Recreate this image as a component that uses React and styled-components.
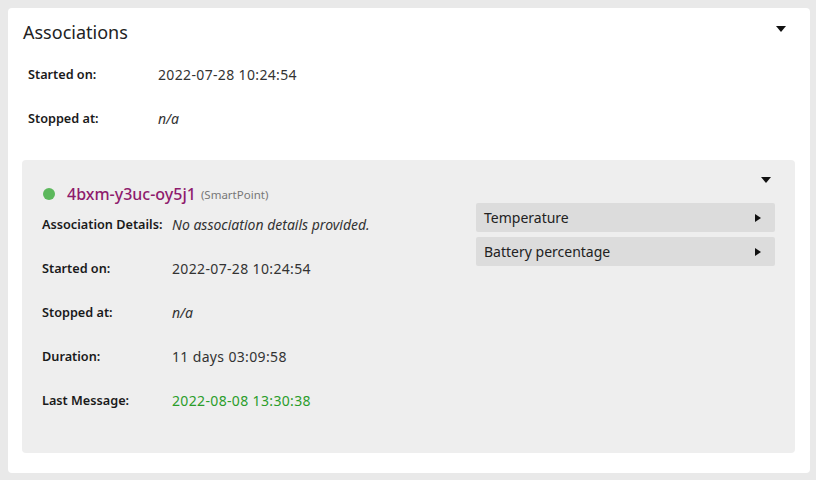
import styled, { createGlobalStyle } from "styled-components";

const GlobalStyle = createGlobalStyle`
  body {
    margin: 0;
    background: #e9e9e9;
    font-family: "Noto Sans", "Open Sans", sans-serif;
    color: #222;
  }
`;

const Page = styled.div`
  padding: 8px 6px 8px 8px;
`;

const Card = styled.section`
  background: #fff;
  border-radius: 4px;
  padding: 13px 15px 20px 14px;
`;

const CardHeader = styled.div`
  display: flex;
  justify-content: space-between;
  align-items: flex-start;
  height: 22px;
  padding-left: 1px;
`;

const Title = styled.h2`
  margin: 0;
  font-size: 18px;
  font-weight: 400;
  line-height: 22px;
  color: #222;
`;

const Caret = styled.span`
  width: 0;
  height: 0;
  border-left: 5px solid transparent;
  border-right: 5px solid transparent;
  border-top: 6px solid #111;
  margin-top: ${(p) => p.top || 0}px;
  margin-right: ${(p) => p.mr || 0}px;
`;

const PlayCaret = styled.span`
  width: 0;
  height: 0;
  border-top: 4.5px solid transparent;
  border-bottom: 4.5px solid transparent;
  border-left: 6px solid #111;
`;

const Rows = styled.div`
  padding: 9px 0 0 ${(p) => p.indent || 0}px;
`;

const Row = styled.div`
  display: grid;
  grid-template-columns: ${(p) => p.labelWidth}px 1fr;
  align-items: center;
  height: 44px;
`;

const Label = styled.span`
  font-size: 12.7px;
  font-weight: 600;
  color: #1a1a1a;
`;

const Value = styled.span`
  font-size: 14px;
  letter-spacing: ${(p) => (p.italic ? "0" : "0.35px")};
  color: ${(p) => p.color || "#333"};
  font-style: ${(p) => (p.italic ? "italic" : "normal")};
`;

const Panel = styled.div`
  margin-top: 20px;
  background: #eeeeee;
  border-radius: 4px;
  padding: 17px 20px 31px 20px;
`;

const PanelHeader = styled.div`
  display: flex;
  justify-content: space-between;
  align-items: flex-start;
  height: 25px;
`;

const DeviceName = styled.div`
  display: flex;
  align-items: center;
  padding-top: 6px;
`;

const Dot = styled.span`
  width: 12px;
  height: 12px;
  border-radius: 50%;
  background: #5cb85c;
  margin: 0 12px 0 1px;
`;

const DeviceId = styled.span`
  font-size: 16px;
  font-weight: 500;
  color: #8e1b6d;
`;

const DeviceType = styled.span`
  font-size: 11.5px;
  color: #777;
  margin-left: 5px;
`;

const PanelBody = styled.div`
  display: grid;
  grid-template-columns: 1fr 299px;
  gap: 20px;
`;

const Sensors = styled.div`
  display: flex;
  flex-direction: column;
  gap: 5px;
  padding-top: 1px;
`;

const SensorButton = styled.button`
  display: flex;
  justify-content: space-between;
  align-items: center;
  height: 29px;
  padding: 0 14px 0 8px;
  background: #dcdcdc;
  border: 0;
  border-radius: 2px;
  font-family: inherit;
  font-size: 14px;
  color: #222;
  cursor: pointer;
`;

export default function App() {
  return (
    <Page>
      <GlobalStyle />
      <Card>
        <CardHeader>
          <Title>Associations</Title>
          <Caret top={5} mr={9} />
        </CardHeader>
        <Rows indent={6}>
          <Row labelWidth={130}>
            <Label>Started on:</Label>
            <Value>2022-07-28 10:24:54</Value>
          </Row>
          <Row labelWidth={130}>
            <Label>Stopped at:</Label>
            <Value italic>n/a</Value>
          </Row>
        </Rows>
        <Panel>
          <PanelHeader>
            <DeviceName>
              <Dot />
              <DeviceId>4bxm-y3uc-oy5j1</DeviceId>
              <DeviceType>(SmartPoint)</DeviceType>
            </DeviceName>
            <Caret top={0} mr={4} />
          </PanelHeader>
          <PanelBody>
            <div>
              <Row labelWidth={130}>
                <Label>Association Details:</Label>
                <Value italic>No association details provided.</Value>
              </Row>
              <Row labelWidth={130}>
                <Label>Started on:</Label>
                <Value>2022-07-28 10:24:54</Value>
              </Row>
              <Row labelWidth={130}>
                <Label>Stopped at:</Label>
                <Value italic>n/a</Value>
              </Row>
              <Row labelWidth={130}>
                <Label>Duration:</Label>
                <Value>11 days 03:09:58</Value>
              </Row>
              <Row labelWidth={130}>
                <Label>Last Message:</Label>
                <Value color="#2a9d2a">2022-08-08 13:30:38</Value>
              </Row>
            </div>
            <Sensors>
              <SensorButton>
                Temperature
                <PlayCaret />
              </SensorButton>
              <SensorButton>
                Battery percentage
                <PlayCaret />
              </SensorButton>
            </Sensors>
          </PanelBody>
        </Panel>
      </Card>
    </Page>
  );
}
